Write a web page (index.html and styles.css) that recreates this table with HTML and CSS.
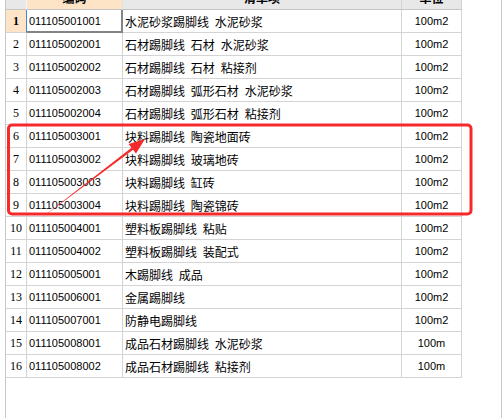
FILE: index.html
```html
<!DOCTYPE html>
<html>
<head>
<meta charset="utf-8">
<link rel="stylesheet" href="styles.css">
</head>
<body>
<div class="frame">
  <div class="grid">
    <div class="row head">
      <div class="c num"></div>
      <div class="c code hl">编码</div>
      <div class="c name">清单项</div>
      <div class="c unit">单位</div>
    </div>
    <div class="row active">
      <div class="c num">1</div>
      <div class="c code">011105001001</div>
      <div class="c name">水泥砂浆踢脚线 水泥砂浆</div>
      <div class="c unit">100m2</div>
    </div>
    <div class="row"><div class="c num">2</div><div class="c code">011105002001</div><div class="c name">石材踢脚线 石材 水泥砂浆</div><div class="c unit">100m2</div></div>
    <div class="row"><div class="c num">3</div><div class="c code">011105002002</div><div class="c name">石材踢脚线 石材 粘接剂</div><div class="c unit">100m2</div></div>
    <div class="row"><div class="c num">4</div><div class="c code">011105002003</div><div class="c name">石材踢脚线 弧形石材 水泥砂浆</div><div class="c unit">100m2</div></div>
    <div class="row"><div class="c num">5</div><div class="c code">011105002004</div><div class="c name">石材踢脚线 弧形石材 粘接剂</div><div class="c unit">100m2</div></div>
    <div class="row"><div class="c num">6</div><div class="c code">011105003001</div><div class="c name">块料踢脚线 陶瓷地面砖</div><div class="c unit">100m2</div></div>
    <div class="row"><div class="c num">7</div><div class="c code">011105003002</div><div class="c name">块料踢脚线 玻璃地砖</div><div class="c unit">100m2</div></div>
    <div class="row"><div class="c num">8</div><div class="c code">011105003003</div><div class="c name">块料踢脚线 缸砖</div><div class="c unit">100m2</div></div>
    <div class="row"><div class="c num">9</div><div class="c code">011105003004</div><div class="c name">块料踢脚线 陶瓷锦砖</div><div class="c unit">100m2</div></div>
    <div class="row"><div class="c num">10</div><div class="c code">011105004001</div><div class="c name">塑料板踢脚线 粘贴</div><div class="c unit">100m2</div></div>
    <div class="row"><div class="c num">11</div><div class="c code">011105004002</div><div class="c name">塑料板踢脚线 装配式</div><div class="c unit">100m2</div></div>
    <div class="row"><div class="c num">12</div><div class="c code">011105005001</div><div class="c name">木踢脚线 成品</div><div class="c unit">100m2</div></div>
    <div class="row"><div class="c num">13</div><div class="c code">011105006001</div><div class="c name">金属踢脚线</div><div class="c unit">100m2</div></div>
    <div class="row"><div class="c num">14</div><div class="c code">011105007001</div><div class="c name">防静电踢脚线</div><div class="c unit">100m2</div></div>
    <div class="row"><div class="c num">15</div><div class="c code">011105008001</div><div class="c name">成品石材踢脚线 水泥砂浆</div><div class="c unit">100m</div></div>
    <div class="row"><div class="c num">16</div><div class="c code">011105008002</div><div class="c name">成品石材踢脚线 粘接剂</div><div class="c unit">100m</div></div>
  </div>
</div>
<svg class="annot" width="503" height="418" viewBox="0 0 503 418">
  <rect x="8.5" y="125" width="462.5" height="89" rx="3.5" fill="none" stroke="#f52b2b" stroke-width="3"/>
  <polygon fill="#f52b2b" points="40,219 133.1,149.7 136,153.5 145,139 128.6,143.9 131.5,147.7"/>
</svg>
</body>
</html>
```

FILE: styles.css
```css
html, body {
  margin: 0;
  padding: 0;
  background: #fff;
  overflow: hidden;
}
body {
  width: 503px;
  height: 418px;
  position: relative;
  font-family: "Liberation Sans", "Noto Sans CJK SC", sans-serif;
  color: #000;
}
.frame {
  margin-left: 5px;
  width: 497px;
  height: 418px;
  box-sizing: border-box;
  border-left: 1px solid #c9c9c9;
  border-right: 1px solid #c9c9c9;
  overflow: hidden;
}
.grid {
  display: flex;
  flex-direction: column;
}
.row {
  display: grid;
  grid-template-columns: 21px 96px 279px 60px;
  height: 23px;
}
.c {
  box-sizing: border-box;
  border-right: 1px solid #d4d4d4;
  border-bottom: 1px solid #d4d4d4;
  display: flex;
  align-items: center;
  white-space: nowrap;
  overflow: hidden;
}
.num {
  justify-content: center;
  font-family: "Liberation Serif", "Noto Sans CJK SC", serif;
  font-size: 12px;
  background: #fff;
}
.code {
  padding-left: 2px;
  font-size: 11px;
}
.name {
  padding-left: 2px;
  font-size: 12px;
  word-spacing: 2.5px;
}
.unit {
  justify-content: center;
  font-size: 11px;
}
.head {
  height: 25px;
  margin-top: -15px;
}
.head .c {
  background: #e8e8e8;
  border-bottom-color: #c4c4c4;
  justify-content: center;
  font-weight: bold;
  font-size: 12px;
  padding-left: 0;
  word-spacing: 0;
}
.head .c.hl {
  background: #fde4c6;
  border-right-color: #e0e0e0;
}
.head .num {
  border-right-color: #f4f4f4;
}
.active .num {
  background: #fde4c6;
  font-weight: bold;
  border-right-color: #3a88e6;
}
.active .code {
  border-right: 2px solid #848484;
  border-bottom: 2px solid #848484;
}
.annot {
  position: absolute;
  left: 0;
  top: 0;
  pointer-events: none;
}
```
